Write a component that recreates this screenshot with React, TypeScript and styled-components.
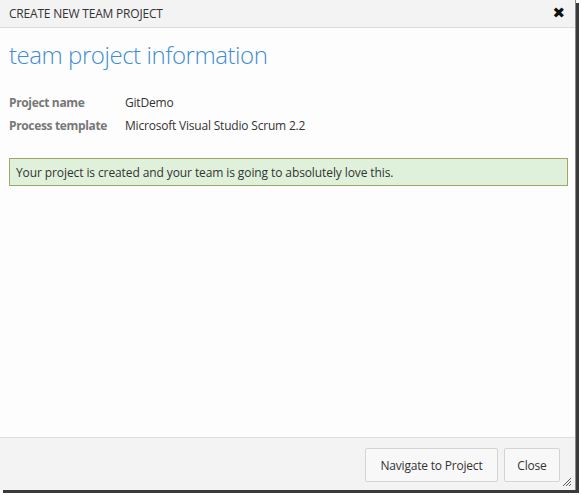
import React from "react";
import styled, { createGlobalStyle } from "styled-components";

const GlobalStyle = createGlobalStyle`
  html, body {
    margin: 0;
    padding: 0;
    background: #ffffff;
  }
  body {
    font-family: "Open Sans", "Noto Sans", "Liberation Sans", sans-serif;
  }
`;

const Page = styled.div`
  width: 581px;
  height: 495px;
  background: #ffffff;
`;

const Dialog = styled.div`
  display: flex;
  flex-direction: column;
  width: 576px;
  height: 490px;
  background: #fdfdfd;
  box-shadow: 3px 3px 0 #3a3a3a;
  border-right: 1px solid #8a8a8a;
  box-sizing: border-box;
  position: relative;
`;

const TitleBar = styled.div`
  display: flex;
  align-items: center;
  justify-content: space-between;
  height: 28px;
  padding: 0 10px 0 9px;
  background: #f3f3f3;
  border-bottom: 1px solid #dcdcdc;
  box-sizing: border-box;
`;

const TitleText = styled.div`
  font-size: 12px;
  color: #333333;
  letter-spacing: -0.2px;
`;

const CloseX = styled.div`
  font-size: 15px;
  font-weight: 700;
  color: #111111;
  line-height: 1;
  font-family: "DejaVu Sans", sans-serif;
`;

const Body = styled.div`
  flex: 1;
  padding: 10px 9px 0 9px;
`;

const Heading = styled.h1`
  margin: 0;
  font-size: 24px;
  font-weight: 300;
  color: #3d8ed5;
  letter-spacing: -0.45px;
`;

const InfoGrid = styled.div`
  display: grid;
  grid-template-columns: 116px auto;
  row-gap: 5px;
  margin-top: 23px;
  font-size: 12px;
  line-height: 18px;
`;

const Label = styled.div`
  color: #777777;
  font-weight: 700;
  letter-spacing: -0.35px;
`;

const Value = styled.div`
  color: #333333;
  letter-spacing: -0.2px;
`;

const Success = styled.div`
  margin-top: 23px;
  width: 559px;
  height: 28px;
  box-sizing: border-box;
  display: flex;
  align-items: center;
  padding-left: 6px;
  background: #dff1da;
  border: 1px solid #9fa765;
  font-size: 12px;
  color: #333333;
  letter-spacing: -0.1px;
`;

const Footer = styled.div`
  display: flex;
  justify-content: flex-end;
  align-items: flex-start;
  gap: 6px;
  height: 53px;
  padding: 10px 15px 0 0;
  background: #f3f3f3;
  border-top: 1px solid #dedede;
  box-sizing: border-box;
`;

const Button = styled.button<{ $w: number }>`
  width: ${(p) => p.$w}px;
  height: 34px;
  background: #f8f8f8;
  border: 1px solid #d4d4d4;
  border-radius: 2px;
  font-family: "Open Sans", "Noto Sans", sans-serif;
  font-size: 12px;
  color: #333333;
  letter-spacing: -0.2px;
  cursor: pointer;
`;

const Grip = styled.svg`
  position: absolute;
  right: 3px;
  bottom: 3px;
`;

export default function App() {
  return (
    <Page>
      <GlobalStyle />
      <Dialog>
        <TitleBar>
          <TitleText>CREATE NEW TEAM PROJECT</TitleText>
          <CloseX>✖</CloseX>
        </TitleBar>
        <Body>
          <Heading>team project information</Heading>
          <InfoGrid>
            <Label>Project name</Label>
            <Value>GitDemo</Value>
            <Label>Process template</Label>
            <Value>Microsoft Visual Studio Scrum 2.2</Value>
          </InfoGrid>
          <Success>
            Your project is created and your team is going to absolutely love this.
          </Success>
        </Body>
        <Footer>
          <Button $w={133}>Navigate to Project</Button>
          <Button $w={56}>Close</Button>
        </Footer>
        <Grip width="10" height="10" viewBox="0 0 10 10">
          <path d="M9 1 L1 9 M9 4 L4 9 M9 7 L7 9" stroke="#555" strokeWidth="1" />
        </Grip>
      </Dialog>
    </Page>
  );
}
